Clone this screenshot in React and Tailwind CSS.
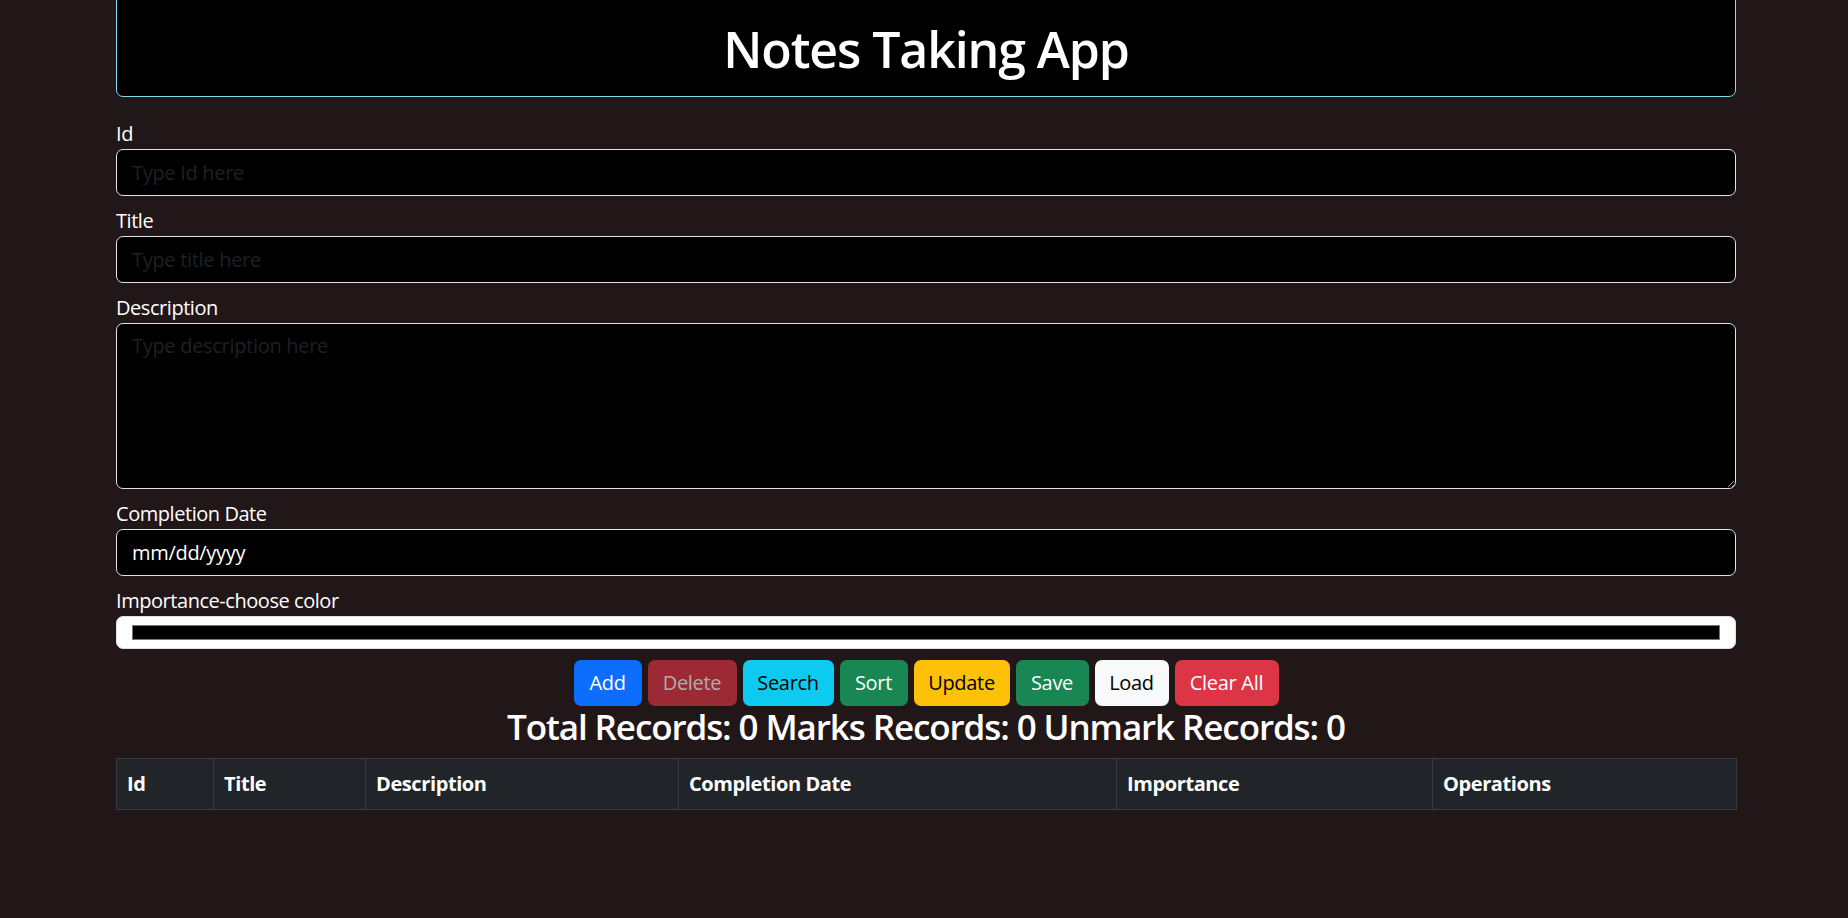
import React from "react";

const font = { fontFamily: '"Open Sans", "Noto Sans", Arial, sans-serif' };

function Label({ children }) {
  return (
    <label className="block text-[20px] leading-[30px] tracking-[-0.45px] text-white">{children}</label>
  );
}

function Field({ label, children }) {
  return (
    <div className="mb-[10px]">
      <Label>{label}</Label>
      {children}
    </div>
  );
}

const inputCls =
  "block w-full h-[47px] rounded-[7px] border border-[#dee2e6] bg-black px-[15px] text-[20px] tracking-[-0.3px] text-white outline-none placeholder:text-[#1d2024]";

const buttons = [
  { t: "Add", w: "w-[68px]", c: "bg-[#0d6efd] text-white" },
  { t: "Delete", w: "w-[89px]", c: "bg-[#9b2a35] text-[#b3aaaa]" },
  { t: "Search", w: "w-[91px]", c: "bg-[#0dcaf0] text-black" },
  { t: "Sort", w: "w-[68px]", c: "bg-[#198754] text-white" },
  { t: "Update", w: "w-[96px]", c: "bg-[#ffc107] text-black" },
  { t: "Save", w: "w-[73px]", c: "bg-[#198754] text-white" },
  { t: "Load", w: "w-[74px]", c: "bg-[#f8f9fa] text-black" },
  { t: "Clear All", w: "w-[104px]", c: "bg-[#dc3545] text-white" },
];

const cols = [
  { t: "Id", w: "w-[97px]" },
  { t: "Title", w: "w-[152px]" },
  { t: "Description", w: "w-[313px]" },
  { t: "Completion Date", w: "w-[438px]" },
  { t: "Importance", w: "w-[316px]" },
  { t: "Operations", w: "w-[304px]" },
];

export default function App() {
  return (
    <div className="min-h-screen overflow-hidden bg-[#211718] pl-[116px]" style={font}>
      <div className="w-[1620px]">
        <div className="-mt-[17px] mb-[22px] rounded-[7px] border border-[#7ddff0] bg-black pt-[35px] pb-[17px]">
          <h1 className="m-0 text-center text-[50px] font-semibold leading-[60px] tracking-[-1.1px] text-white">
            Notes Taking App
          </h1>
        </div>

        <Field label="Id">
          <input type="text" placeholder="Type Id here" className={inputCls} />
        </Field>
        <Field label="Title">
          <input type="text" placeholder="Type title here" className={inputCls} />
        </Field>
        <Field label="Description">
          <textarea
            placeholder="Type description here"
            className="block h-[166px] w-full rounded-[7px] border border-[#dee2e6] bg-black px-[15px] py-[7px] text-[20px] leading-[30px] tracking-[-0.3px] text-white outline-none placeholder:text-[#1d2024]"
          />
        </Field>
        <Field label="Completion Date">
          <input type="text" readOnly defaultValue="mm/dd/yyyy" className={inputCls} />
        </Field>
        <Field label="Importance-choose color">
          <div className="h-[33px] rounded-[7px] border border-[#dee2e6] bg-white px-[15px] py-[8px]">
            <div className="h-[15px] w-full border border-[#767676] bg-black" />
          </div>
        </Field>

        <div className="flex justify-center gap-[6px] pt-[1px]">
          {buttons.map((b) => (
            <button
              key={b.t}
              className={`flex h-[46px] items-center justify-center rounded-[7px] text-[20px] leading-[30px] tracking-[-0.3px] ${b.w} ${b.c}`}
            >
              {b.t}
            </button>
          ))}
        </div>

        <h3 className="m-0 mb-[10px] text-center text-[35px] font-semibold leading-[42px] tracking-[-1.1px] text-white">
          Total Records: 0 Marks Records: 0 Unmark Records: 0
        </h3>

        <table className="w-full table-fixed border-collapse border border-[#373b3e] bg-[#212529]">
          <thead>
            <tr>
              {cols.map((c) => (
                <th
                  key={c.t}
                  className={`${c.w} border border-[#373b3e] px-[10px] py-[10px] text-left text-[20px] font-bold leading-[30px] tracking-[-0.4px] text-white`}
                >
                  {c.t}
                </th>
              ))}
            </tr>
          </thead>
        </table>
      </div>
    </div>
  );
}
